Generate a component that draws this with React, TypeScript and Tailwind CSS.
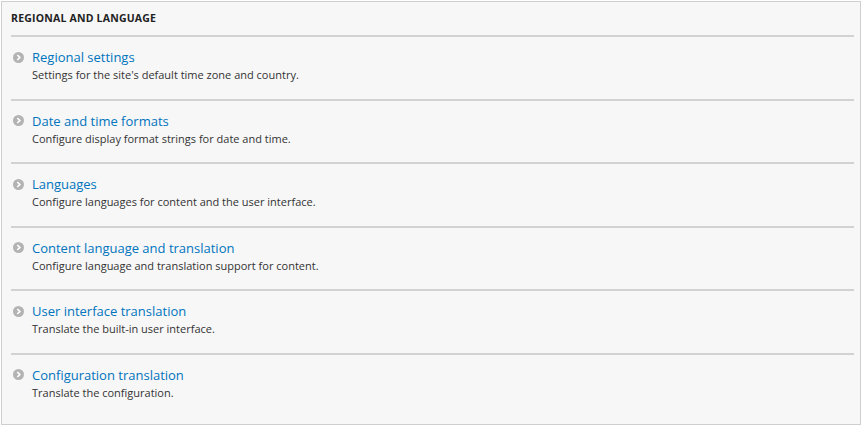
const items = [
  { title: "Regional settings", desc: "Settings for the site's default time zone and country." },
  { title: "Date and time formats", desc: "Configure display format strings for date and time." },
  { title: "Languages", desc: "Configure languages for content and the user interface." },
  { title: "Content language and translation", desc: "Configure language and translation support for content." },
  { title: "User interface translation", desc: "Translate the built-in user interface." },
  { title: "Configuration translation", desc: "Translate the configuration." },
];

function ArrowIcon() {
  return (
    <svg width="11" height="11" viewBox="0 0 11 11" className="shrink-0">
      <circle cx="5.5" cy="5.5" r="5.5" fill="#b3b3b3" />
      <path d="M4.3 3 L6.8 5.5 L4.3 8" stroke="#fff" strokeWidth="1.7" fill="none" />
    </svg>
  );
}

export default function App() {
  return (
    <div className="bg-white w-[863px] h-[426px] p-px font-['Open_Sans',sans-serif]">
      <div className="w-[860px] h-[424px] border border-[#cfcfcf] bg-[#f7f7f7] pl-[9px] pr-[6px]">
        <div className="h-[35px] border-b-2 border-[#d2d2d2] flex items-center pt-px">
          <h2 className="text-[10.5px] font-bold uppercase text-[#222] tracking-[0.2px]">
            Regional and Language
          </h2>
        </div>
        <ul>
          {items.map((item, i) => (
            <li
              key={item.title}
              className={
                i < items.length - 1
                  ? "h-[63.5px] border-b-2 border-[#d2d2d2] pt-[12px]"
                  : "h-[63.5px] pt-[12px]"
              }
            >
              <div className="flex items-center h-[16px]">
                <span className="w-[21px] pl-[2px] flex">
                  <ArrowIcon />
                </span>
                <a href="#" className="text-[13px] text-[#0074bd] leading-[16px]">
                  {item.title}
                </a>
              </div>
              <p className="ml-[21px] mt-[3px] text-[11px] leading-[14px] text-[#333]">
                {item.desc}
              </p>
            </li>
          ))}
        </ul>
      </div>
    </div>
  );
}
